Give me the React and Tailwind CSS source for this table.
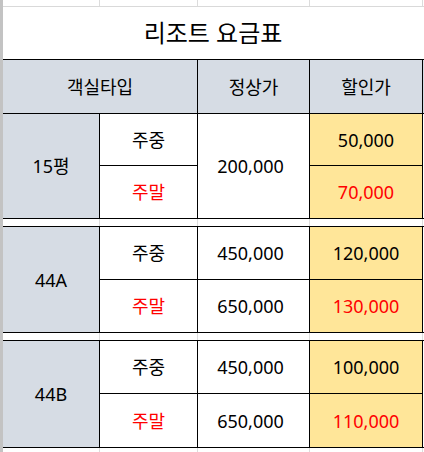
import React from "react";

const GRAY = "bg-[#d6dce4]";
const YEL = "bg-[#ffe699]";

function GridStrip({ h, top = false }) {
  return (
    <div className={`flex shrink-0 ${h} ${top ? "border-b border-[#d9d9d9]" : ""}`}>
      <div className="w-[97px] border-r border-[#dcdcdc]" />
      <div className="w-[98px] border-r border-[#dcdcdc]" />
      <div className="w-[112px] border-r border-[#dcdcdc]" />
      <div className="w-[113px] border-r border-[#dcdcdc]" />
    </div>
  );
}

function Cell({ children, className = "" }) {
  return <div className={`flex items-center justify-center ${className}`}>{children}</div>;
}

function Block({ name, h, r1, rows, merged }) {
  // rows: [{day, red, price, disc}]
  return (
    <div className={`flex shrink-0 ${h}`}>
      <Cell className={`w-[97px] border-r border-black ${GRAY}`}>{name}</Cell>
      <div className="w-[98px] border-r border-black flex flex-col">
        <Cell className={r1}>주중</Cell>
        <Cell className="flex-1 border-t border-black text-[#ff0000]">주말</Cell>
      </div>
      {merged ? (
        <Cell className="w-[112px] border-r border-black pr-[6px]">{merged}</Cell>
      ) : (
        <div className="w-[112px] border-r border-black flex flex-col">
          <Cell className={`${r1} pr-[6px]`}>{rows[0].price}</Cell>
          <Cell className="flex-1 border-t border-black pr-[6px]">{rows[1].price}</Cell>
        </div>
      )}
      <div className={`w-[113px] border-r border-black flex flex-col ${YEL}`}>
        <Cell className={r1}>{rows[0].disc}</Cell>
        <Cell className="flex-1 border-t border-black text-[#ff0000]">{rows[1].disc}</Cell>
      </div>
    </div>
  );
}

export default function App() {
  return (
    <div className="w-[424px] h-[452px] bg-white flex overflow-hidden text-black text-[18px] leading-none font-['Noto_Sans','Noto_Sans_CJK_KR',sans-serif]">
      <div className="w-[3px] shrink-0 bg-[#c3c3c3]" />
      <div className="w-[421px] flex flex-col">
        <GridStrip h="h-[7px]" top />
        <div className="h-[52px] shrink-0 flex items-center justify-center text-[24px] w-[420px] pb-[1px]">
          리조트 요금표
        </div>
        <div className={`h-[55px] shrink-0 flex border-y border-black ${GRAY}`}>
          <Cell className="w-[195px] border-r border-black">객실타입</Cell>
          <Cell className="w-[112px] border-r border-black">정상가</Cell>
          <Cell className="w-[113px] border-r border-black">할인가</Cell>
        </div>
        <div className="h-[105px] shrink-0 border-b border-black">
          <Block
            name="15평"
            h="h-[104px]"
            r1="h-[51px]"
            merged="200,000"
            rows={[{ disc: "50,000" }, { disc: "70,000" }]}
          />
        </div>
        <GridStrip h="h-[7px]" />
        <div className="h-[107px] shrink-0 border-y border-black">
          <Block
            name="44A"
            h="h-[105px]"
            r1="h-[52px]"
            rows={[
              { price: "450,000", disc: "120,000" },
              { price: "650,000", disc: "130,000" },
            ]}
          />
        </div>
        <GridStrip h="h-[7px]" />
        <div className="h-[108px] shrink-0 border-y border-black">
          <Block
            name="44B"
            h="h-[106px]"
            r1="h-[52px]"
            rows={[
              { price: "450,000", disc: "100,000" },
              { price: "650,000", disc: "110,000" },
            ]}
          />
        </div>
        <GridStrip h="flex-1" />
      </div>
    </div>
  );
}
